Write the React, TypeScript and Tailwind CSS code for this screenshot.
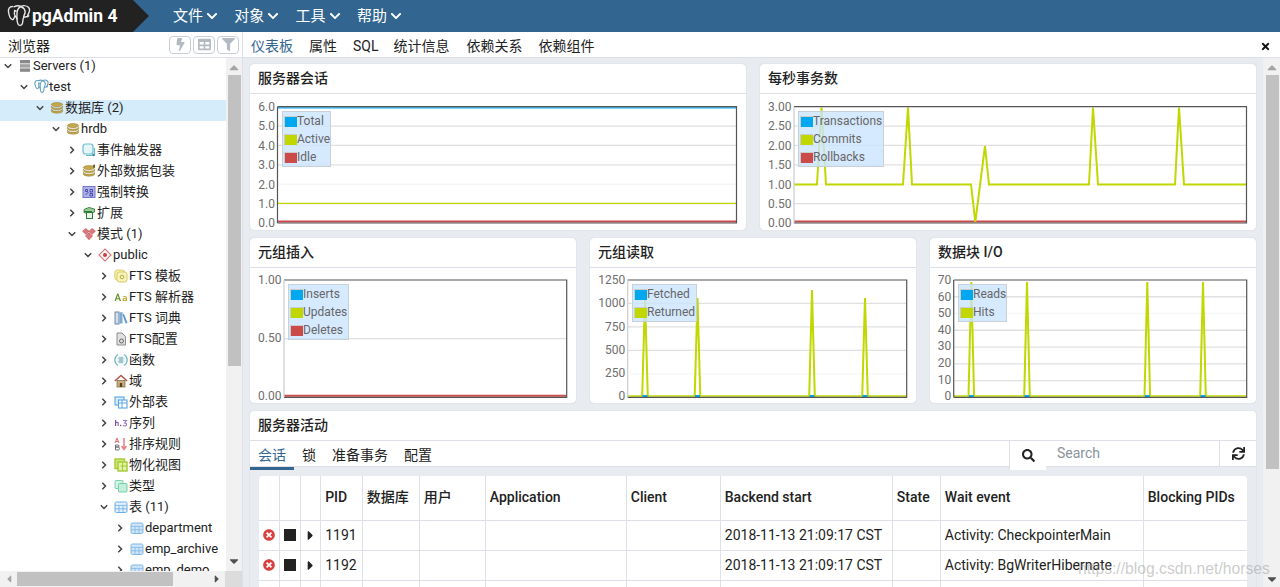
import React from "react";
import { FaBolt, FaTable, FaFilter, FaTimes, FaChevronDown, FaSearch, FaSync, FaCaretRight, FaCaretUp, FaCaretDown, FaCaretLeft, FaTimesCircle } from "react-icons/fa";

const font = "[font-family:Roboto,'Noto_Sans_CJK_SC',sans-serif]";

function Elephant({ color, size, w = 1.5 }: { color: string; size: number; w?: number }) {
  return (
    <svg width={size} height={size} viewBox="0 0 24 24" fill="none" stroke={color} strokeWidth={w} strokeLinejoin="round" strokeLinecap="round">
      <path d="M5.5 2.5C2.5 2.5 1 5 1.5 8c.5 3.2 2 7 3.8 7.6 1.4.4 2-1.8 2.6-3.2" />
      <path d="M7 2.8C9 1.8 12 1.6 14 2.4c2-.9 5.5-.9 7.4.8 1.6 1.6 1.3 3.8.4 5.8-.6 1.3-1.4 2.2-1.2 3.6" />
      <path d="M13.6 2.6c-2 1-3.4 3.4-3.6 6.4-.2 3.6-.2 8.6 1 11 .8 1.7 3 1.8 4 .4 1-1.6.8-4 1.2-6 .4-1.4 1.8-1.6 3-1.6 1.4 0 2.4-.4 2.6-1" />
      <path d="M14 3c3 .6 4.6 3.2 4 6-.3 1.4-1.2 2.2-1.4 4" />
      <path d="M7.6 6.4c-.4 2-.6 4 .6 5.6.8 1 1.6 1.4 1.8 2.8" />
      <circle cx="8.6" cy="7" r=".4" />
    </svg>
  );
}

const S = ({ children }: { children: React.ReactNode }) => (
  <svg width="14" height="14" viewBox="0 0 14 14" fill="none">{children}</svg>
);
const Cyl = ({ c = "#c4a84d", d = "#8f7a2e" }: { c?: string; d?: string }) => (
  <>
    <ellipse cx="7" cy="3.6" rx="5.6" ry="2.1" fill={c} stroke={d} strokeWidth=".5" />
    <path d="M1.4 5.2c0 1.2 2.6 2 5.6 2s5.6-.8 5.6-2v1.6c0 1.1-2.6 2-5.6 2s-5.6-.9-5.6-2z" fill={c} stroke={d} strokeWidth=".5" />
    <path d="M1.4 8.3c0 1.2 2.6 2 5.6 2s5.6-.8 5.6-2v1.9c0 1.1-2.6 2-5.6 2s-5.6-.9-5.6-2z" fill={c} stroke={d} strokeWidth=".5" />
  </>
);
const GridT = ({ c, f = "#e3f0fb" }: { c: string; f?: string }) => (
  <>
    <rect x="1" y="2" width="12" height="10.5" rx="1.5" fill={f} stroke={c} />
    <path d={`M1 5.4h12M1 8.8h12M5 5.4v7M9 5.4v7`} stroke={c} strokeWidth=".8" />
  </>
);

const icons: Record<string, React.ReactNode> = {
  servers: (
    <S>
      <rect x="2" y="1" width="10" height="3.4" fill="#8a8a8a" />
      <rect x="2" y="5.2" width="10" height="3.4" fill="#a0a0a0" />
      <rect x="2" y="9.4" width="10" height="3.4" fill="#8a8a8a" />
    </S>
  ),
  server: <Elephant color="#5f9cc0" size={15} w={1.7} />,
  db: <S><Cyl /></S>,
  trigger: (
    <S>
      <rect x="1" y="1" width="10" height="10" rx="2.5" fill="#e5f5f8" stroke="#6cbccb" strokeWidth="1.2" />
      <path d="M4 12.5h6.5a2 2 0 0 0 2-2V5" stroke="#6cbccb" strokeWidth="1.2" />
      <circle cx="11.5" cy="12" r="1.2" fill="#2e8ea3" />
    </S>
  ),
  fdw: (
    <S>
      <Cyl />
      <path d="M11 1l2-.5v3l-1.500 .5z" fill="#6b5a20" />
    </S>
  ),
  cast: (
    <S>
      <rect x="1" y="1.500" width="12" height="11" fill="#aeb0e6" stroke="#7476c8" />
      <path d="M3.500 10l3-3M8 4.500h2.500v2.500H8zM3.500 4.500h2v2h-2zM8 8.500h2.500V11H8z" stroke="#3f41a8" strokeWidth=".9" />
    </S>
  ),
  ext: (
    <S>
      <path d="M2 3.500l5-2 5.500 1.500v3l-5.500 2-5-1.500z" fill="#9cc79b" stroke="#3f8a46" />
      <rect x="4.500" y="6.500" width="6" height="6" fill="#e8f3e6" stroke="#2e7a39" />
      <path d="M2 5.500h8" stroke="#2e7a39" />
    </S>
  ),
  schemas: (
    <S>
      <path d="M3.800 1.500L7 4.200l-3.200 3L.6 4.200z" fill="#d9797c" stroke="#b9474b" strokeWidth=".6" />
      <path d="M10.200 1.500L13.400 4.200l-3.200 3L7 4.200z" fill="#d9797c" stroke="#b9474b" strokeWidth=".6" />
      <path d="M7 5.500l3.500 3.300L7 12.800 3.500 8.800z" fill="#d9797c" stroke="#b9474b" strokeWidth=".6" />
    </S>
  ),
  public: (
    <S>
      <path d="M7 1l6 6-6 6-6-6z" fill="#fff" stroke="#d9797c" strokeWidth="1.1" />
      <circle cx="7" cy="7" r="2" fill="#d0393e" />
    </S>
  ),
  ftstpl: (
    <S>
      <rect x=".8" y="1" width="10" height="10" rx="2.500" fill="#f7efae" stroke="#dccf6e" />
      <rect x="3" y="3" width="10" height="10" rx="2.500" fill="#f8f2bc" stroke="#d8c95e" />
      <circle cx="8" cy="8" r="1.800" stroke="#a79a2a" strokeWidth=".8" />
    </S>
  ),
  parser: (
    <svg width="14" height="14" viewBox="0 0 14 14">
      <path d="M.5 11l2.800-7.500h1L7 11H5.700l-.6-1.800H2.500L1.900 11zM2.900 8.200h1.900L3.800 5.200z" fill="#5f8f2d" />
      <path d="M10.500 6c1.600 0 2.500.7 2.500 2v3h-1.100v-.6c-1 1-3.400.9-3.400-.7 0-1.400 1.700-1.700 3.300-1.600 0-1.300-1.800-1.200-2.800-.6l-.3-.8c.5-.4 1.100-.7 1.800-.7zm1.300 2.800c-1.100 0-2.100.1-2.100.8 0 .8 1.700.8 2.100-.2z" fill="#c0a72b" />
    </svg>
  ),
  dict: (
    <S>
      <rect x="1" y="1" width="4" height="12" fill="#d4dfe9" stroke="#5c7d9c" strokeWidth=".9" />
      <path d="M5.500 1.500l3-.5v11.500h-3z" fill="#7fa9cf" />
      <path d="M8.500 3.500l1.500-.6 3.500 9-1.800.7z" fill="#4f96d2" />
    </S>
  ),
  ftscfg: (
    <S>
      <path d="M3 1h5l3.500 3.500V13H3z" fill="#e0e0e0" stroke="#8e8e8e" />
      <circle cx="7.500" cy="9" r="2" stroke="#666" strokeWidth="1" />
    </S>
  ),
  func: (
    <S>
      <path d="M4 1.500C1.800 3 .8 5 .8 7s1 4 3.200 5.500M10 1.500C12.200 3 13.200 5 13.200 7s-1 4-3.200 5.500" stroke="#79b9c8" strokeWidth="1.300" />
      <circle cx="7" cy="7" r="4.200" fill="#e6f2f5" />
      <path d="M4.800 5h4.400M4.800 7h4.400M4.800 9h4.400" stroke="#4d8fa3" strokeWidth=".9" />
    </S>
  ),
  domain: (
    <S>
      <path d="M.8 7L7 1.500 13.200 7" stroke="#b4574a" strokeWidth="1.500" />
      <rect x="3" y="6.500" width="8" height="6.500" fill="#c9b07f" stroke="#7a6237" strokeWidth=".7" />
      <rect x="5.800" y="9" width="2.400" height="4" fill="#5a4422" />
    </S>
  ),
  ftable: (
    <S>
      <rect x="1" y="2" width="9" height="8" fill="#dcecfa" stroke="#5aa6e4" strokeWidth="1.100" />
      <rect x="4.500" y="5" width="8.500" height="8" fill="#fff" stroke="#5aa6e4" strokeWidth="1.100" />
      <path d="M4.500 8h8.500M8 5v8" stroke="#5aa6e4" />
    </S>
  ),
  seq: (
    <svg width="14" height="14" viewBox="0 0 14 14">
      <rect x="1" y="4" width="1.200" height="6" fill="#7b4b9c" />
      <path d="M2 6.400h2.200V10" stroke="#7b4b9c" fill="none" />
      <rect x="6" y="8.800" width="1.300" height="1.300" fill="#555" />
      <path d="M9 4.500h3.500L10.500 7c1.800 0 2.200 1 2 1.800-.3 1.500-2.600 1.500-3.500.6" stroke="#9b73cc" fill="none" strokeWidth="1.100" />
    </svg>
  ),
  coll: (
    <S>
      <path d="M1 6l2-5 2 5M1.800 4.400h2.400" stroke="#e06b6b" strokeWidth="1" />
      <path d="M1.500 8h2.500c1.500 0 1.500 2 0 2H1.500zM1.500 10H4.500c1.400 0 1.400 3-.3 3H1.500z" stroke="#555" strokeWidth=".8" />
      <path d="M10 1v11M7.500 9l2.500 3.500L12.500 9" stroke="#e58181" strokeWidth="1.500" />
    </S>
  ),
  mview: (
    <S>
      <rect x="1" y="1" width="9.500" height="9.500" fill="#cfe67a" stroke="#a2c934" strokeWidth="1.400" />
      <rect x="4" y="4" width="9" height="9" fill="#e4f2a6" stroke="#a2c934" strokeWidth="1.400" />
      <path d="M6.500 8h6.500M8.500 4.500v8" stroke="#a2c934" />
    </S>
  ),
  type: (
    <S>
      <rect x="1" y="1.500" width="8" height="8" rx="1" fill="#d3f3e5" stroke="#7ed2ad" />
      <rect x="4.500" y="4.500" width="8.500" height="8.500" rx="1" fill="#c3eedb" stroke="#72cfa5" />
    </S>
  ),
  tables: <S><GridT c="#6aaee6" /></S>,
  table: <S><GridT c="#7fb8e6" f="#cfe4f6" /></S>,
};

type Row = { l: number; i: string; t: string; o?: boolean; sel?: boolean };
const rows: Row[] = [
  { l: 0, i: "servers", t: "Servers (1)", o: true },
  { l: 1, i: "server", t: "test", o: true },
  { l: 2, i: "db", t: "数据库 (2)", o: true, sel: true },
  { l: 3, i: "db", t: "hrdb", o: true },
  { l: 4, i: "trigger", t: "事件触发器" },
  { l: 4, i: "fdw", t: "外部数据包装" },
  { l: 4, i: "cast", t: "强制转换" },
  { l: 4, i: "ext", t: "扩展" },
  { l: 4, i: "schemas", t: "模式 (1)", o: true },
  { l: 5, i: "public", t: "public", o: true },
  { l: 6, i: "ftstpl", t: "FTS 模板" },
  { l: 6, i: "parser", t: "FTS 解析器" },
  { l: 6, i: "dict", t: "FTS 词典" },
  { l: 6, i: "ftscfg", t: "FTS配置" },
  { l: 6, i: "func", t: "函数" },
  { l: 6, i: "domain", t: "域" },
  { l: 6, i: "ftable", t: "外部表" },
  { l: 6, i: "seq", t: "序列" },
  { l: 6, i: "coll", t: "排序规则" },
  { l: 6, i: "mview", t: "物化视图" },
  { l: 6, i: "type", t: "类型" },
  { l: 6, i: "tables", t: "表 (11)", o: true },
  { l: 7, i: "table", t: "department" },
  { l: 7, i: "table", t: "emp_archive" },
  { l: 7, i: "table", t: "emp_demo" },
];

function Chev({ open }: { open?: boolean }) {
  return (
    <svg width="8" height="8" viewBox="0 0 8 8" fill="none" stroke="#444" strokeWidth="1.500">
      {open ? <path d="M.8 2.300L4 5.500l3.200-3.200" /> : <path d="M2.300 .8L5.500 4 2.300 7.200" />}
    </svg>
  );
}

function Tree() {
  return (
    <div className="min-h-0 flex-1 overflow-hidden">
      {rows.map((r, k) => (
        <div
          key={k}
          className={`flex h-[21px] items-start text-[13px] leading-[15px] whitespace-nowrap text-[#222] ${r.sel ? "bg-[#d5ecfb]" : ""}`}
          style={{ paddingLeft: 4 + r.l * 16 }}
        >
          <span className="flex h-[15px] w-[8px] items-center justify-center"><Chev open={r.o} /></span>
          <span className="ml-[6px] flex h-[15px] w-[15px] items-center">{icons[r.i]}</span>
          <span>{r.t}</span>
        </div>
      ))}
    </div>
  );
}

const GREEN = "#c0d800";
const RED = "#cb4b4b";
const BLUE = "#00a8f0";

type ChartP = {
  box: [number, number, number, number];
  plot: [number, number, number, number];
  labels: string[];
  faint?: number;
  darkLeft?: boolean;
  shrink?: number;
  legend: string[];
  legendClass: string;
  children: React.ReactNode;
};

function Chart({ box, plot, labels, faint, darkLeft, shrink = 0, legend, legendClass, children }: ChartP) {
  const [x, y, w, h] = box;
  const [l, t, r, b] = plot;
  const n = labels.length - 1;
  const colors = [BLUE, GREEN, RED];
  return (
    <div className="relative min-h-0 flex-1">
      <svg width={w} height={h} viewBox={`${x} ${y} ${w} ${h}`} className="block">
        {labels.map((s, i) => {
          const yy = t + ((b - t) * i) / n;
          return (
            <g key={i}>
              {i > 0 && i < n && (
                <line x1={l} x2={r} y1={yy} y2={yy} stroke={i === faint ? "#f6f6f6" : "#e0e0e0"} strokeWidth="1.300" />
              )}
              <text x={l - 2.500} y={yy + 4.300 - (shrink * i) / n} textAnchor="end" fontSize="12" fill="#6e6e6e" fontFamily="Roboto, sans-serif">{s}</text>
            </g>
          );
        })}
        {children}
        <path d={`M${l} ${t}H${r}V${b}H${l}`} fill="none" stroke="#555" strokeWidth="1.200" />
        <line x1={l} x2={l} y1={t} y2={b} stroke={darkLeft ? "#555" : "#ccc"} strokeWidth="1.200" />
      </svg>
      <div className={`absolute border border-[#c8d0d8] bg-[#cce5ff]/80 pl-px text-[12px] leading-[18px] text-[#666] ${legendClass}`}>
        {legend.map((s, i) => (
          <div key={s} className="flex h-[18px] items-center">
            <span className="flex h-[11px] w-[13px] flex-none flex-col items-end border-t border-l border-[#ccc]">
              <span className="block h-[10px] w-[12px]" style={{ background: colors[i] }} />
            </span>
            <span>{s}</span>
          </div>
        ))}
      </div>
    </div>
  );
}

function Card({ title, className, children }: { title: string; className?: string; children: React.ReactNode }) {
  return (
    <div className={`flex flex-col overflow-hidden rounded-[4px] bg-white shadow-[0_0_1px_rgba(120,130,150,0.55)] ${className ?? ""}`}>
      <div className="flex h-[30px] flex-none items-center border-b border-[#dde0e6] pl-2 text-[14px] font-medium text-[#222]">{title}</div>
      {children}
    </div>
  );
}

function peaks(xs: number[], base: number, tops: number[], hw: number) {
  return xs.map((p, i) => (
    <path key={p} d={`M${p - hw} ${base}L${p} ${tops[i]}L${p + hw} ${base}`} fill="none" stroke={GREEN} strokeWidth="2" />
  ));
}
function blues(xs: number[], base: number) {
  return xs.map((p) => <rect key={p} x={p - 2.500} y={base - 1.500} width="5" height="2" fill={BLUE} />);
}

const cols = [20.3, 21, 20.4, 41.6, 57, 66, 141, 94, 172, 48, 203, 104];
const heads = ["", "", "", "PID", "数据库", "用户", "Application", "Client", "Backend start", "State", "Wait event", "Blocking PIDs"];
const bodyRows = [
  ["1191", "2018-11-13 21:09:17 CST", "Activity: CheckpointerMain"],
  ["1192", "2018-11-13 21:09:17 CST", "Activity: BgWriterHibernate"],
  ["", "", ""],
];

function ActivityTable() {
  return (
    <table className="w-[988px] table-fixed border-collapse overflow-hidden rounded-[4px] bg-white text-[14px] text-[#222]">
      <colgroup>
        {cols.map((c, i) => <col key={i} style={{ width: c }} />)}
      </colgroup>
      <thead>
        <tr className="h-[44px]">
          {heads.map((h, i) => (
            <th key={i} className="border border-t-0 border-[#dde0e6] px-1 text-left font-medium first:border-l-0 last:border-r-0 whitespace-nowrap">{h}</th>
          ))}
        </tr>
      </thead>
      <tbody>
        {bodyRows.map((r, k) => (
          <tr key={k} className="h-[30px]">
            <td className="border border-[#dde0e6] border-l-0 text-center">
              {r[0] && <FaTimesCircle className="mx-auto text-[12px] text-[#d9413f]" />}
            </td>
            <td className="border border-[#dde0e6]">
              {r[0] && <span className="mx-auto block h-[12px] w-[12px] bg-[#222]" />}
            </td>
            <td className="border border-[#dde0e6]">
              {r[0] && <FaCaretRight className="mx-auto text-[15px] text-[#222]" />}
            </td>
            <td className="border border-[#dde0e6] px-1">{r[0]}</td>
            <td className="border border-[#dde0e6]" />
            <td className="border border-[#dde0e6]" />
            <td className="border border-[#dde0e6]" />
            <td className="border border-[#dde0e6]" />
            <td className="border border-[#dde0e6] px-1 whitespace-nowrap">{r[1]}</td>
            <td className="border border-[#dde0e6]" />
            <td className="border border-[#dde0e6] px-1 whitespace-nowrap">{r[2]}</td>
            <td className="border border-[#dde0e6] border-r-0" />
          </tr>
        ))}
      </tbody>
    </table>
  );
}

function ToolBtn({ children }: { children: React.ReactNode }) {
  return (
    <span className="flex h-[18px] w-[22px] items-center justify-center rounded-[4px] border border-[#c5ced8] text-[13px] text-[#b4bac2]">{children}</span>
  );
}

export default function App() {
  return (
    <div className={`flex h-[587px] w-[1280px] flex-col overflow-hidden bg-white ${font}`}>
      <header className="flex h-8 flex-none bg-[#326690] text-white">
        <div className="relative flex h-8 w-[133px] items-center bg-[#222] pl-[7px]">
          <Elephant color="#e8e8e8" size={24} w={1.4} />
          <span className="ml-px text-[17.5px] leading-8 font-bold">pgAdmin 4</span>
          <span className="absolute top-0 left-[133px] h-0 w-0 border-y-[16px] border-l-[16px] border-y-transparent border-l-[#222]" />
        </div>
        <nav className="ml-[40px] flex gap-[16.3px] text-[15px] leading-8">
          {["文件", "对象", "工具", "帮助"].map((m) => (
            <span key={m} className="flex w-[45px] items-center whitespace-nowrap">
              {m}
              <FaChevronDown className="ml-[3px] flex-none text-[12px]" />
            </span>
          ))}
        </nav>
      </header>

      <div className="flex min-h-0 flex-1">
        <aside className="flex w-[243px] flex-none flex-col border-r border-[#dde0e6]">
          <div className="flex h-[26px] flex-none items-center justify-between border-b border-[#dde0e6] pr-[3px] pl-2 text-[14px] text-[#222]">
            <span className="pt-[3px]">浏览器</span>
            <span className="flex gap-[2px]">
              <ToolBtn><FaBolt /></ToolBtn>
              <ToolBtn><FaTable /></ToolBtn>
              <ToolBtn><FaFilter /></ToolBtn>
            </span>
          </div>
          <div className="flex min-h-0 flex-1 flex-col">
            <div className="flex min-h-0 flex-1">
              <div className="flex min-w-0 flex-1 flex-col"><Tree /></div>
              <div className="flex w-[16px] flex-none flex-col items-center bg-[#f1f1f1] text-[#555]">
                <FaCaretUp className="mt-[2px] h-[15px] flex-none text-[12px] text-[#a5a5a5]" />
                <div className="h-[291px] w-[13px] flex-none bg-[#c1c1c1]" />
                <div className="flex-1" />
                <FaCaretDown className="mb-[3px] h-[14px] flex-none text-[12px] text-[#505050]" />
              </div>
            </div>
            <div className="flex h-[16px] flex-none bg-[#f1f1f1]">
              <div className="flex w-[17px] flex-none items-center justify-center text-[12px] text-[#a5a5a5]"><FaCaretLeft /></div>
              <div className="my-[1px] w-[156px] flex-none bg-[#c1c1c1]" />
              <div className="flex-1" />
              <div className="flex w-[16px] flex-none items-center justify-center text-[12px] text-[#505050]"><FaCaretRight /></div>
              <div className="w-[17px] flex-none bg-[#dcdcdc]" />
            </div>
          </div>
        </aside>

        <main className="flex min-w-0 flex-1 flex-col">
          <div className="flex h-[26px] flex-none items-center border-b border-[#dde0e6] pt-[3px] pl-2 text-[14px] text-[#222]">
            <span className="mr-[16px] text-[#326690]">仪表板</span>
            <span className="mr-[16px]">属性</span>
            <span className="mr-[15px]">SQL</span>
            <span className="mr-[17px]">统计信息</span>
            <span className="mr-[16px]">依赖关系</span>
            <span>依赖组件</span>
            <FaTimes className="mr-[9px] ml-auto text-[11px] text-[#111]" />
          </div>
          <div className="flex min-h-0 flex-1">
            <div className="flex min-w-0 flex-1 flex-col gap-2 overflow-hidden bg-[#e8ecf1] px-[7px] pt-[6px]">
              <div className="grid h-[166px] flex-none grid-cols-2 gap-[14px]">
                <Card title="服务器会话">
                  <Chart
                    box={[250, 94, 496, 136]}
                    plot={[277.5, 106.7, 736.5, 223]}
                    labels={["6.0", "5.0", "4.0", "3.0", "2.0", "1.0", "0.0"]}
                    faint={4}
                    darkLeft
                    legend={["Total", "Active", "Idle"]}
                    legendClass="left-[32px] top-[17px] w-[49px]"
                  >
                    <line x1="278" x2="736" y1="107.800" y2="107.800" stroke={BLUE} strokeWidth="1.200" />
                    <line x1="278" x2="736" y1="203.300" y2="203.300" stroke={GREEN} strokeWidth="1.300" />
                    <line x1="278" x2="736" y1="221.400" y2="221.400" stroke={RED} strokeWidth="2" />
                  </Chart>
                </Card>
                <Card title="每秒事务数">
                  <Chart
                    box={[760, 94, 496, 136]}
                    plot={[794, 106.7, 1246.5, 223]}
                    labels={["3.00", "2.50", "2.00", "1.50", "1.00", "0.50", "0.00"]}
                    faint={4}
                    legend={["Transactions", "Commits", "Rollbacks"]}
                    legendClass="left-[38px] top-[17px] w-[86px]"
                  >
                    <line x1="794" x2="1246" y1="221.400" y2="221.400" stroke={RED} strokeWidth="2" />
                    <path
                      d="M794 184.500H817L821.500 107.500L826 184.500H903L908 107.500L912 184.500H971L975.300 222L985 146L989 184.500H1089L1093 107.500L1098 184.500H1175L1179 107.500L1184 184.500H1246"
                      fill="none"
                      stroke={GREEN}
                      strokeWidth="2"
                    />
                  </Chart>
                </Card>
              </div>
              <div className="grid h-[165px] flex-none grid-cols-3 gap-[14px]">
                <Card title="元组插入">
                  <Chart
                    box={[250, 268, 326, 135]}
                    plot={[284, 280, 566.7, 397.3]}
                    labels={["1.00", "0.50", "0.00"]}
                    shrink={1.500}
                    legend={["Inserts", "Updates", "Deletes"]}
                    legendClass="left-[38px] top-[16px] w-[61px]"
                  >
                    <line x1="284" x2="566" y1="395.700" y2="395.700" stroke={RED} strokeWidth="2" />
                  </Chart>
                </Card>
                <Card title="元组读取">
                  <Chart
                    box={[590, 268, 326, 135]}
                    plot={[627.7, 280, 906.7, 397.3]}
                    labels={["1250", "1000", "750", "500", "250", "0"]}
                    faint={4}
                    shrink={1.500}
                    legend={["Fetched", "Returned"]}
                    legendClass="left-[42px] top-[16px] w-[65px]"
                  >
                    <line x1="628" x2="906" y1="396" y2="396" stroke={GREEN} strokeWidth="1.500" />
                    {peaks([645, 697.5, 812, 865], 396.500, [298, 298, 290, 298], 2.800)}
                    {blues([645, 697.5, 812, 865], 396.500)}
                  </Chart>
                </Card>
                <Card title="数据块 I/O">
                  <Chart
                    box={[930, 268, 326, 135]}
                    plot={[953.7, 280, 1246.7, 397.3]}
                    labels={["70", "60", "50", "40", "30", "20", "10", "0"]}
                    faint={2}
                    darkLeft
                    shrink={1.500}
                    legend={["Reads", "Hits"]}
                    legendClass="left-[28px] top-[16px] w-[49px]"
                  >
                    <line x1="954" x2="1246" y1="396" y2="396" stroke={GREEN} strokeWidth="1.500" />
                    {peaks([971.3, 1027, 1147.3, 1203], 396.500, [282, 282, 282, 282], 2.800)}
                    {blues([971.3, 1027, 1147.3, 1203], 396.500)}
                  </Chart>
                </Card>
              </div>
              <div className="flex min-h-0 flex-1 flex-col rounded-t-[4px] shadow-[0_0_1px_rgba(120,130,150,0.55)]">
                <div className="flex h-[30px] flex-none items-center rounded-t-[4px] border-b border-[#dde0e6] bg-white pl-2 text-[14px] font-medium text-[#222]">服务器活动</div>
                <div className="relative z-10 flex h-[26px] flex-none border-b border-[#dde0e6] bg-white text-[14px] text-[#222]">
                  <span className="h-[29px] w-[44px] flex-none border-b-[3px] border-[#326690] pt-[4px] pl-2 text-[#326690]">会话</span>
                  <span className="ml-2 pt-[4px]">锁</span>
                  <span className="ml-4 pt-[4px]">准备事务</span>
                  <span className="ml-4 pt-[4px]">配置</span>
                  <div className="ml-auto flex">
                    <span className="flex h-[29px] w-[37px] items-center justify-center border-l border-[#dde0e6] bg-white text-[13px] text-[#222]"><FaSearch /></span>
                    <span className="w-[173px] pt-[2px] pl-[11px] text-[#8a939c]">Search</span>
                    <span className="flex w-[37px] items-center justify-center border-l border-[#dde0e6] text-[13px] text-[#222]"><FaSync /></span>
                  </div>
                </div>
                <div className="min-h-0 flex-1 overflow-hidden bg-[#e8ecf1] pt-[9px] pl-[9px]">
                  <ActivityTable />
                </div>
              </div>
            </div>
            <div className="flex w-[17px] flex-none flex-col items-center bg-[#f1f1f1] pl-px">
              <FaCaretUp className="mt-[2px] h-[15px] flex-none text-[12px] text-[#a5a5a5]" />
              <div className="h-[394px] w-[13px] flex-none bg-[#c1c1c1]" />
              <div className="flex-1" />
              <FaCaretDown className="mb-[1px] h-[14px] flex-none text-[12px] text-[#505050]" />
            </div>
          </div>
        </main>
      </div>
      <div className="pointer-events-none absolute top-[560px] left-[1078px] [font-family:'Liberation_Sans',sans-serif] text-[15.7px] leading-[18px] whitespace-nowrap text-[#9a9a9a]/50">https://blog.csdn.net/horses</div>
    </div>
  );
}
